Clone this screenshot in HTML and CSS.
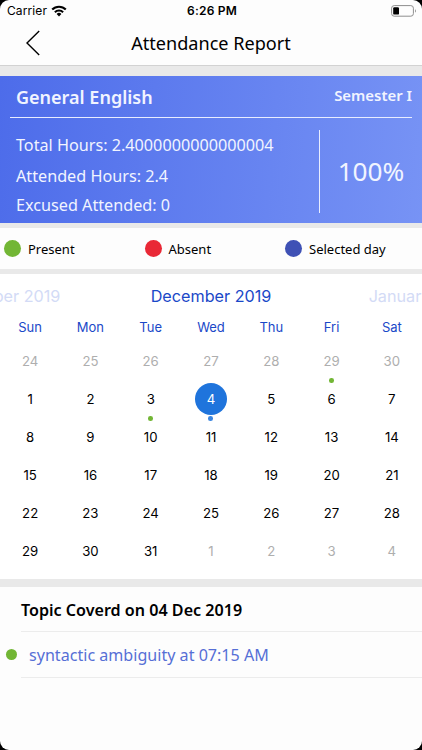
FILE: index.html
```
<!DOCTYPE html>
<html lang="en">
<head>
    <meta charset="UTF-8">
    <meta name="viewport" content="width=device-width, initial-scale=1.0">
    <title>Attendance Report</title>
    <link rel="stylesheet" href="styles.css">
</head>
<body>
    <div class="screen">
        <div class="status-bar">
            <div class="carrier">
                <span>Carrier</span>
                <svg class="wifi" width="16" height="12" viewBox="0 0 16 12">
                    <path d="M1.2 4.5a9.6 9.6 0 0 1 13.6 0M3.9 7.2a5.8 5.8 0 0 1 8.2 0" fill="none" stroke="#000" stroke-width="2.1"/>
                    <path d="M8 11.4L5.6 9a3.4 3.4 0 0 1 4.8 0z"/>
                </svg>
            </div>
            <span class="time">6:26 PM</span>
            <svg class="battery" width="26" height="12" viewBox="0 0 26 12">
                <rect x="0.6" y="0.6" width="21.8" height="10.6" rx="2.6" fill="none" stroke="#8e8e8e"/>
                <rect x="2.2" y="2.2" width="5.8" height="7.4" rx="1.2"/>
                <path d="M24 4.2c1.2.5 1.2 2.9 0 3.4z" fill="#8e8e8e"/>
            </svg>
        </div>

        <header>
            <svg class="back" width="14" height="26" viewBox="0 0 14 26">
                <path d="M13.2 1L1 13l12.2 12" fill="none" stroke="#000" stroke-width="1.4"/>
            </svg>
            <h1>Attendance Report</h1>
        </header>

        <section class="summary">
            <div class="summary-head">
                <h2>General English</h2>
                <span class="semester">Semester I</span>
            </div>
            <div class="summary-body">
                <div class="hours">
                    <p>Total Hours: 2.4000000000000004</p>
                    <p>Attended Hours: 2.4</p>
                    <p>Excused Attended: 0</p>
                </div>
                <div class="percent">100%</div>
            </div>
        </section>

        <section class="legend">
            <div class="legend-item"><i class="dot present"></i><span>Present</span></div>
            <div class="legend-item"><i class="dot absent"></i><span>Absent</span></div>
            <div class="legend-item"><i class="dot selected-day"></i><span>Selected day</span></div>
        </section>

        <section class="calendar">
            <div class="months">
                <span class="month">November 2019</span>
                <span class="month current">December 2019</span>
                <span class="month">January 2020</span>
            </div>
            <div class="weekdays">
                <span>Sun</span><span>Mon</span><span>Tue</span><span>Wed</span><span>Thu</span><span>Fri</span><span>Sat</span>
            </div>
            <div class="days">
                <span class="other">24</span><span class="other">25</span><span class="other">26</span><span class="other">27</span><span class="other">28</span><span class="other event">29</span><span class="other">30</span>
                <span>1</span><span>2</span><span class="event">3</span><span class="event active"><b>4</b></span><span>5</span><span>6</span><span>7</span>
                <span>8</span><span>9</span><span>10</span><span>11</span><span>12</span><span>13</span><span>14</span>
                <span>15</span><span>16</span><span>17</span><span>18</span><span>19</span><span>20</span><span>21</span>
                <span>22</span><span>23</span><span>24</span><span>25</span><span>26</span><span>27</span><span>28</span>
                <span>29</span><span>30</span><span>31</span><span class="other">1</span><span class="other">2</span><span class="other">3</span><span class="other">4</span>
            </div>
        </section>

        <section class="topics">
            <h3>Topic Coverd on 04 Dec 2019</h3>
            <div class="topic">
                <i class="topic-dot"></i>
                <span class="topic-name">syntactic ambiguity at 07:15 AM</span>
            </div>
        </section>
    </div>
</body>
</html>
```
FILE: styles.css
```
:root {
    --blue: #1a48c8;
    --green: #72b635;
    --grey: #e9e9e9;
}

* {
    margin: 0;
    padding: 0;
    box-sizing: border-box;
}

body {
    background-color: #000;
    color: #000;
    font-family: 'Noto Sans', 'Open Sans', sans-serif;
}

.screen {
    height: 750px;
    display: flex;
    flex-direction: column;
    background-color: #fdfdfd;
    border-radius: 9px;
    overflow: hidden;
}

.status-bar {
    height: 22px;
    padding: 0 5px 1px 7px;
    display: grid;
    grid-template-columns: 1fr auto 1fr;
    align-items: center;
    font-family: Inter, sans-serif;
    font-size: 12px;
}

.carrier {
    display: flex;
    align-items: center;
    gap: 4px;
    letter-spacing: 0.1px;
}

.time {
    font-weight: 600;
    letter-spacing: 0.2px;
}

.battery {
    justify-self: end;
}

header {
    height: 44px;
    flex-shrink: 0;
    padding-bottom: 2px;
    display: grid;
    grid-template-columns: 40px 1fr 40px;
    align-items: center;
    border-bottom: 1px solid #d2d2d2;
}

.back {
    justify-self: end;
}

header h1 {
    font-size: 18.1px;
    font-weight: 400;
    line-height: 40px;
    text-align: center;
}

.summary {
    height: 157px;
    flex-shrink: 0;
    padding: 0 10px;
    border-top: 10px solid var(--grey);
    background: linear-gradient(95deg, #4d6cea, #7793f5) padding-box;
    color: #f1f4ff;
}

.summary-head {
    height: 42px;
    padding-left: 6px;
    display: flex;
    justify-content: space-between;
    border-bottom: 1px solid #e8edff;
}

.summary-head h2 {
    font-size: 18px;
    font-weight: 600;
    line-height: 42px;
}

.semester {
    font-size: 14.9px;
    font-weight: 600;
    line-height: 38px;
}

.summary-body {
    height: 95px;
    margin-top: 12px;
    padding-left: 6px;
    display: flex;
}

.hours {
    flex: 1;
    padding-top: 1px;
    font-size: 16.2px;
    line-height: 29px;
}

.hours p:first-child {
    margin-bottom: 2px;
}

.percent {
    width: 93px;
    height: 83px;
    padding-left: 10px;
    border-left: 1px solid #e8edff;
    font-size: 26.2px;
    line-height: 83px;
    text-align: center;
}

.legend {
    height: 51px;
    flex-shrink: 0;
    padding-left: 4px;
    display: flex;
    border-top: 5px solid var(--grey);
    border-bottom: 5px solid var(--grey);
    font-size: 13px;
}

.legend-item {
    width: 140.5px;
    flex-shrink: 0;
    display: flex;
    align-items: center;
    gap: 7px;
}

.dot {
    width: 17px;
    height: 17px;
    border-radius: 50%;
}

.present {
    background-color: var(--green);
}

.absent {
    background-color: #e92836;
}

.selected-day {
    background-color: #3f51b5;
}

.calendar {
    height: 305px;
    flex-shrink: 0;
    padding-top: 4px;
    background-color: #fff;
    font-family: Inter, sans-serif;
    text-align: center;
}

/* neighbouring months run off both edges */
.months {
    height: 36px;
    display: flex;
    justify-content: center;
    font-size: 16.2px;
    line-height: 36px;
}

.month {
    width: 211px;
    flex-shrink: 0;
    color: #d3dbf6;
}

.month.current {
    color: var(--blue);
}

.weekdays,
.days {
    display: grid;
    grid-template-columns: repeat(7, 1fr);
}

.weekdays {
    height: 28px;
    color: var(--blue);
    font-size: 13px;
    line-height: 26px;
}

.days {
    grid-auto-rows: 38.1px;
    font-size: 13.2px;
    line-height: 38px;
}

.days span {
    position: relative;
}

.days .other {
    color: #aeaeae;
}

.days .event::after {
    content: "";
    position: absolute;
    left: 50%;
    bottom: -2.5px;
    width: 4.6px;
    height: 4.6px;
    margin-left: -2.6px;
    border-radius: 50%;
    background-color: var(--green);
}

.days .active b {
    display: block;
    width: 32px;
    height: 32px;
    margin: 3px auto;
    border-radius: 50%;
    background-color: #1f74dc;
    color: #fff;
    font-weight: 400;
    line-height: 32px;
}

.days .active::after {
    background-color: #3c86e0;
}

.topics {
    flex: 1;
    border-top: 8px solid var(--grey);
    padding-left: 21px;
}

.topics h3 {
    height: 45px;
    border-bottom: 1px solid #ececec;
    font-size: 16.1px;
    font-weight: 600;
    line-height: 46px;
}

.topic {
    position: relative;
    height: 46px;
    padding-left: 8px;
    border-bottom: 1px solid #ececec;
    color: #566fd6;
    font-size: 16.1px;
    line-height: 47px;
}

/* sits left of the row, outside the divider */
.topic-dot {
    position: absolute;
    left: -15px;
    top: 17px;
    width: 11px;
    height: 11px;
    border-radius: 50%;
    background-color: var(--green);
}
```
